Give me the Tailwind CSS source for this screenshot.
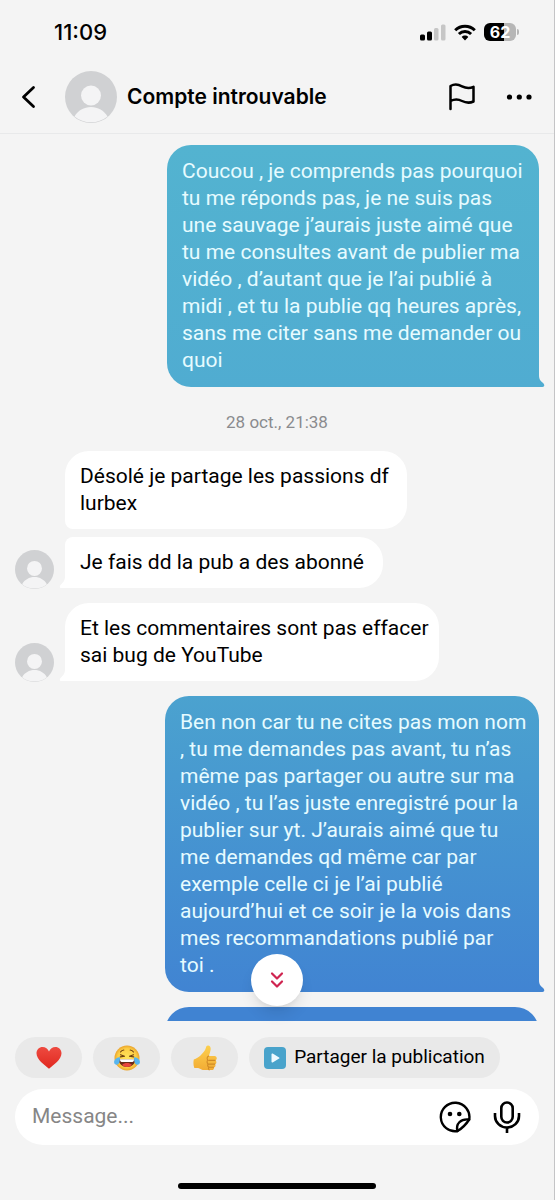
<!DOCTYPE html>
<html lang="fr">
<head>
<meta charset="utf-8">
<meta name="viewport" content="width=device-width, initial-scale=1">
<title>Compte introuvable</title>
<script src="https://cdn.jsdelivr.net/npm/@tailwindcss/browser@4"></script>
</head>
<body class="bg-[#f4f4f4] font-[Roboto,sans-serif] text-black">
<svg class="hidden" aria-hidden="true">
  <symbol id="avatar" viewBox="0 0 52 52">
    <circle cx="26" cy="26" r="26" fill="#d0d1d3"/>
    <circle cx="26" cy="24.500" r="10" fill="#f4f4f5"/>
    <path d="M9.500 45.500C13 39.500 19 36 26 36s13 3.500 16.500 9.500A26 26 0 0 1 26 51.300a26 26 0 0 1-16.500-5.800z" fill="#f4f4f5"/>
  </symbol>
  <symbol id="tail-right" viewBox="0 0 6 12">
    <path d="M0 0C0 4 1 5.500 3.500 7.500C6.200 9.500 5.500 12 3.500 12H0z" fill="currentColor"/>
  </symbol>
  <symbol id="tail-left" viewBox="0 0 6 12">
    <path d="M6 0C6 4 5 5.500 2.500 8C0 10 .5 12 2.500 12H6z" fill="currentColor"/>
  </symbol>
</svg>
<div class="flex h-screen flex-col overflow-hidden border-r border-[#c4c4c6]">
  <div class="flex h-16 shrink-0 items-center justify-between pr-[35px] pl-[54px]">
    <time class="font-[Inter,sans-serif] text-[22px] font-medium">11:09</time>
    <div class="flex items-center gap-2">
      <svg class="h-[17px] w-[26px]" viewBox="0 0 26 17" aria-label="Réseau">
        <rect x="0" y="10.500" width="5" height="6" rx="1.500"/>
        <rect x="7" y="7.500" width="5" height="9" rx="1.500"/>
        <rect x="14" y="4" width="4.500" height="12.500" rx="1.500" fill="#c6c6c6"/>
        <rect x="21" y="0.500" width="4.500" height="16" rx="1.500" fill="#c6c6c6"/>
      </svg>
      <svg class="h-[17px] w-[22px]" viewBox="0 0 22 17" fill="none" stroke="#000" stroke-width="3" aria-label="Wi-Fi">
        <path d="M1.200 6.200a14 14 0 0 1 19.600 0"/>
        <path d="M4.900 10a8.800 8.800 0 0 1 12.200 0"/>
        <path d="M11 11.600c1.300 0 2.400.5 3.300 1.300L11 16.400l-3.300-3.500c.9-.8 2-1.300 3.300-1.300z" fill="#000" stroke="none"/>
      </svg>
      <div class="flex items-center gap-px">
        <div class="flex h-[18px] w-8 items-center justify-center rounded-md bg-linear-to-r from-black from-62% to-[#b6b6b6] to-62% font-[Inter,sans-serif] text-base font-bold text-white">62</div>
        <div class="h-[6px] w-[2px] rounded-r-full bg-[#b6b6b6]"></div>
      </div>
    </div>
  </div>

  <header class="flex h-[70px] shrink-0 items-center border-b border-[#e8e9ea] pr-[21px] pb-[3px] pl-[20px]">
    <button class="mr-[27px]" aria-label="Retour">
      <svg class="h-6 w-[18px]" viewBox="0 0 18 24" fill="none" stroke="#000" stroke-width="2.800" stroke-linecap="round" stroke-linejoin="round"><path d="M13.500 2.500 3.500 12l10 9.500"/></svg>
    </button>
    <svg class="size-[52px]" aria-hidden="true"><use href="#avatar"/></svg>
    <h1 class="ml-[10px] flex-1 font-[Inter,sans-serif] text-[21px] font-semibold">Compte introuvable</h1>
    <button class="mr-7" aria-label="Signaler">
      <svg class="h-[30px] w-[30px]" viewBox="0 0 30 30" fill="none" stroke="#000" stroke-width="2.500" stroke-linecap="round" stroke-linejoin="round"><path d="M3.500 27V4c4-2.200 7.500-1.800 11.500.3 4 2 7.500 2.300 11.500.5v14.700c-4 1.800-7.500 1.500-11.500-.5-4-2.100-7.500-2-11.500 0"/></svg>
    </button>
    <button aria-label="Plus d’options">
      <svg class="h-6 w-7" viewBox="0 0 28 24"><circle cx="4.500" cy="12" r="2.600"/><circle cx="14.300" cy="12" r="2.600"/><circle cx="24" cy="12" r="2.600"/></svg>
    </button>
  </header>

  <div class="relative min-h-0 flex-1">
    <main class="flex h-full flex-col overflow-hidden pt-[11px] pr-[15px] pl-[15px] text-[21px] leading-[27px]">
      <p class="relative w-[372px] shrink-0 self-end rounded-3xl rounded-br-none bg-linear-to-b from-[#53b3d0] to-[#50acd1] py-[13px] pl-[15px] text-[#e6fbff]">Coucou , je comprends pas pourquoi<br>tu me réponds pas, je ne suis pas<br>une sauvage j’aurais juste aimé que<br>tu me consultes avant de publier ma<br>vidéo , d’autant que je l’ai publié à<br>midi , et tu la publie qq heures après,<br>sans me citer sans me demander ou<br>quoi<svg class="absolute bottom-0 left-full h-3 w-[6px] text-[#50acd1]" aria-hidden="true"><use href="#tail-right"/></svg></p>

      <time class="mt-6 shrink-0 self-center text-[17px] leading-[22px] text-[#8a8b8e]">28 oct., 21:38</time>

      <p class="mt-[18px] ml-[50px] w-[342px] shrink-0 rounded-3xl rounded-bl-lg bg-white py-3 pl-[15px]">Désolé je partage les passions df<br>lurbex</p>

      <div class="mt-2 flex shrink-0 items-end gap-[11px]">
        <svg class="-mb-px size-[39px]" aria-hidden="true"><use href="#avatar"/></svg>
        <p class="relative w-[318px] rounded-3xl rounded-tl-lg rounded-bl-none bg-white py-3 pl-[15px]">Je fais dd la pub a des abonné<svg class="absolute right-full bottom-0 h-3 w-[6px] text-white" aria-hidden="true"><use href="#tail-left"/></svg></p>
      </div>

      <div class="mt-[15px] flex shrink-0 items-end gap-[11px]">
        <svg class="-mb-px size-[39px]" aria-hidden="true"><use href="#avatar"/></svg>
        <p class="relative w-[374px] rounded-3xl rounded-bl-none bg-white py-3 pl-[15px]">Et les commentaires sont pas effacer<br>sai bug de YouTube<svg class="absolute right-full bottom-0 h-3 w-[6px] text-white" aria-hidden="true"><use href="#tail-left"/></svg></p>
      </div>

      <p class="relative mt-[15px] w-[374px] shrink-0 self-end rounded-3xl rounded-br-none bg-linear-to-b from-[#4ba2cf] to-[#4184d2] py-[13px] pl-[15px] text-[#e6fbff]">Ben non car tu ne cites pas mon nom<br>, tu me demandes pas avant, tu n’as<br>même pas partager ou autre sur ma<br>vidéo , tu l’as juste enregistré pour la<br>publier sur yt. J’aurais aimé que tu<br>me demandes qd même car par<br>exemple celle ci je l’ai publié<br>aujourd’hui et ce soir je la vois dans<br>mes recommandations publié par<br>toi .<svg class="absolute bottom-0 left-full h-3 w-[6px] text-[#4184d2]" aria-hidden="true"><use href="#tail-right"/></svg></p>

      <div class="mt-[15px] h-14 w-[374px] shrink-0 self-end rounded-3xl bg-[#4083d2]"></div>
    </main>
    <button class="absolute bottom-[15px] left-1/2 flex size-[52px] -translate-x-1/2 items-center justify-center rounded-full bg-white shadow-lg" aria-label="Aller aux derniers messages">
      <svg class="h-[18px] w-[14px]" viewBox="0 0 14 18" fill="none" stroke="#cf2450" stroke-width="2.200" stroke-linecap="round" stroke-linejoin="round"><path d="m2 2.500 5 5 5-5M2 10.500l5 5 5-5"/></svg>
    </button>
  </div>

  <footer class="flex shrink-0 flex-col px-[15px] pt-4 pb-[11px]">
    <div class="flex gap-[11px]">
      <button class="flex h-[41px] w-[67px] items-center justify-center rounded-full bg-[#e9e9e9]" aria-label="Cœur">
        <svg class="h-6 w-[26px]" viewBox="0 0 26 24"><defs><linearGradient id="heart" x2="0" y2="1"><stop stop-color="#ee4a40"/><stop offset="1" stop-color="#e0281f"/></linearGradient></defs><path d="M13 22.800C8.500 19 .5 13.500.5 7.300.5 3.600 3.200 1 6.600 1 9.400 1 12 2.700 13 5.600 14 2.700 16.600 1 19.400 1c3.400 0 6.100 2.600 6.100 6.300 0 6.200-8 11.700-12.500 15.500z" fill="url(#heart)"/></svg>
      </button>
      <button class="flex h-[41px] w-[67px] items-center justify-center rounded-full bg-[#e9e9e9]" aria-label="Rire aux larmes">
        <svg class="h-[26px] w-[26px]" viewBox="0 0 26 26"><defs><radialGradient id="face"><stop stop-color="#ffe45c"/><stop offset=".75" stop-color="#fdce45"/><stop offset="1" stop-color="#eaa42d"/></radialGradient></defs>
          <circle cx="13" cy="13" r="12.500" fill="url(#face)"/>
          <g fill="none" stroke="#6b3d12" stroke-linecap="round"><path d="M6.500 7c.8-1.200 2-1.900 3.300-2M19.500 7c-.8-1.200-2-1.900-3.300-2" stroke-width="1.100"/><path d="m6.500 9.800 4 1.400-4.200.7M19.500 9.800l-4 1.400 4.200.7" stroke-width="1.100" stroke-linejoin="round"/></g>
          <path d="M4.700 14.300h16.600c0 4.600-3.600 7.700-8.300 7.700s-8.300-3.100-8.300-7.700z" fill="#6a2a16"/>
          <path d="M6 14.300h14c0 1.800-.6 2.700-1.600 2.700H7.600c-1 0-1.600-.9-1.600-2.700z" fill="#fff"/>
          <path d="M8 20c1.300-1.500 3-2 5-2s3.700.5 5 2c-1.400 1.300-3.100 2-5 2s-3.600-.7-5-2z" fill="#e8453c"/>
          <path d="M6 12.300c-3 0-5.500 1.700-5.900 4.200-.3 2.200 1.200 3.500 2.800 3.300C5.400 19.500 6 16 6 12.300zM20 12.300c3 0 5.500 1.700 5.900 4.200.3 2.200-1.200 3.500-2.800 3.300-2.500-.3-3.100-3.800-3.100-7.500z" fill="#57b5ef"/>
        </svg>
      </button>
      <button class="flex h-[41px] w-[67px] items-center justify-center rounded-full bg-[#e9e9e9]" aria-label="Pouce levé">
        <svg class="h-[26px] w-6" viewBox="0 0 24 26"><defs><linearGradient id="thumb" x2="0" y2="1"><stop stop-color="#fdd04d"/><stop offset="1" stop-color="#f2ac35"/></linearGradient></defs>
          <path d="M.8 14.500C3.500 13.300 5.500 12.500 7.500 10.500c2.600-2.600 4.500-4.600 5.400-7.700.4-1.500 1-2.300 2.200-2.200 2 .1 2.900 1.900 2.500 4.200-.3 2-1.200 4.300-1.700 6.200h5.600c3 .3 2.700 3.800.9 4.300 1.500 1 1.200 3.300-.4 3.800 1 1.200.4 2.900-1.200 3.200.6 1.400-.3 2.700-2 2.700H11c-2 0-3.200-.9-4.500-1.600-1.600-.7-3.800-.4-5.200-.4C.3 20.500.2 17.500.8 14.500z" fill="url(#thumb)"/>
          <path d="M22 15.400h-6.200M21.800 19.100h-5.900M20.600 22.300h-4.500M15.800 11c-1.700.7-2.200 2.500-1.100 4-1 1.300-.8 3 .4 3.900-.7 1.200-.4 2.600.7 3.300-.6 1-.4 2.100.3 2.700" fill="none" stroke="#d08a26" stroke-width="1.100" stroke-linecap="round"/>
        </svg>
      </button>
      <button class="flex h-[41px] w-[251px] items-center justify-center gap-2 rounded-full bg-[#e9e9e9] text-[19px]">
        <svg class="size-[22px]" viewBox="0 0 22 22" aria-hidden="true"><rect width="22" height="22" rx="4" fill="#49a3cb"/><path d="M7.500 7.200c0-.7.6-1 1.200-.7l6.400 3.900c.5.300.5.900 0 1.200l-6.400 3.900c-.6.300-1.200 0-1.200-.7z" fill="#eefaff"/></svg>
        <span>Partager la publication</span>
      </button>
    </div>
    <div class="mt-[11px] flex h-14 items-center rounded-full bg-white pr-[18px] pl-[17px]">
      <input type="text" aria-label="Message" placeholder="Message..." class="min-w-0 flex-1 text-[21px] outline-none placeholder:text-[#868686]">
      <button class="mr-[22px]" aria-label="Autocollants">
        <svg class="size-8" viewBox="0 0 32 32" fill="none" stroke="#000" stroke-width="2.400" stroke-linecap="round" stroke-linejoin="round"><path d="M18.500 30.100A14.300 14.300 0 1 1 30.200 18.500C27 23.500 23.500 27 18.500 30.100z"/><path d="M18.500 30.100C16.500 23 21.500 17.500 30.200 18.500" /><g fill="#000" stroke="none"><circle cx="11" cy="13" r="2.300"/><circle cx="20.300" cy="13" r="2.300"/></g></svg>
      </button>
      <button aria-label="Message vocal">
        <svg class="h-8 w-7" viewBox="0 0 28 32" fill="none" stroke="#000" stroke-width="2.600"><rect x="8.300" y="1.500" width="11.400" height="20" rx="5.700"/><path d="M2 12v3a12 11.500 0 0 0 24 0v-3M14 26.500V32"/></svg>
      </button>
    </div>
    <div class="mt-[38px] h-[6px] w-[198px] self-center rounded-full bg-black"></div>
  </footer>
</div>
</body>
</html>
